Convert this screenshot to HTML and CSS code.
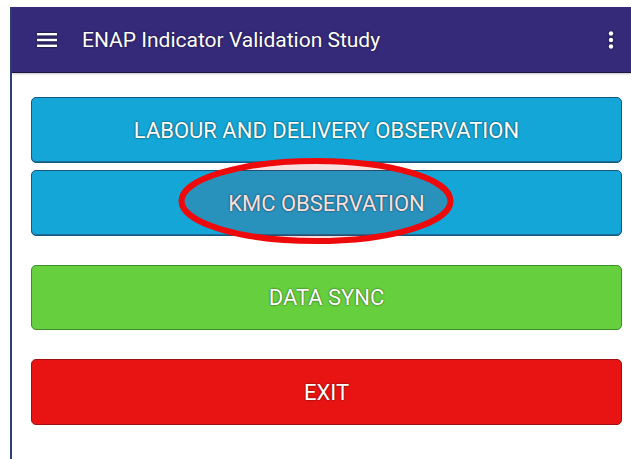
FILE: index.html
```html
<!DOCTYPE html>
<html>
<head>
	<meta charset="utf-8">
	<title>ENAP Indicator Validation Study</title>
	<link rel="stylesheet" href="styles.css">
</head>
<body>
<div class="app">
	<header class="toolbar">
		<span class="menu-icon">
			<svg width="20" height="14" viewBox="0 0 20 14">
				<rect x="0" y="0" width="20" height="2.4" fill="#fff"/>
				<rect x="0" y="5.8" width="20" height="2.4" fill="#fff"/>
				<rect x="0" y="11.6" width="20" height="2.4" fill="#fff"/>
			</svg>
		</span>
		<h1 class="title">ENAP Indicator Validation Study</h1>
		<span class="more-icon">
			<svg width="6" height="18" viewBox="0 0 6 18">
				<circle cx="3" cy="2.5" r="2.2" fill="#fff"/>
				<circle cx="3" cy="9" r="2.2" fill="#fff"/>
				<circle cx="3" cy="15.5" r="2.2" fill="#fff"/>
			</svg>
		</span>
	</header>

	<main class="content">
		<div class="group">
			<button class="btn btn-blue">LABOUR AND DELIVERY OBSERVATION</button>
			<button class="btn btn-blue marked">
				KMC OBSERVATION
				<svg class="circle-mark" width="280" height="90" viewBox="0 0 280 90">
					<ellipse cx="140" cy="45" rx="134.5" ry="40" fill="rgba(190,0,0,0.12)" stroke="#ee0a0a" stroke-width="6"/>
				</svg>
			</button>
		</div>
		<button class="btn btn-green">DATA SYNC</button>
		<button class="btn btn-red">EXIT</button>
	</main>
</div>
</body>
</html>
```

FILE: styles.css
```css
body {
	margin: 0;
	padding: 0;
	background: #fff;
	font-family: Roboto, "Liberation Sans", sans-serif;
}

.app {
	margin: 7px 0 0 10px;
	min-height: 452px;
	border-left: 2px solid #2d4170;
}

.toolbar {
	display: flex;
	align-items: center;
	height: 65px;
	background-color: #35297a;
	color: #fff;
	border-bottom: 1px solid #1c1640;
	box-shadow: 0 1px 2px rgba(0, 0, 0, 0.25);
}

.menu-icon {
	display: flex;
	margin-left: 25px;
	filter: drop-shadow(0 0 1px rgba(0, 0, 0, 0.8));
}

.title {
	margin: 0 0 0 25px;
	font-size: 21px;
	font-weight: 400;
	text-shadow: 0 0 2px rgba(0, 0, 0, 0.7);
	flex: 1;
}

.more-icon {
	display: flex;
	margin-right: 17px;
	filter: drop-shadow(0 0 1px rgba(0, 0, 0, 0.8));
}

.content {
	display: flex;
	flex-direction: column;
	gap: 29px;
	padding: 24px 9px 0 19px;
}

.group {
	display: flex;
	flex-direction: column;
	gap: 7px;
}

.btn {
	display: flex;
	align-items: center;
	justify-content: center;
	height: 66px;
	border-radius: 5px;
	color: #fff;
	font-family: inherit;
	font-size: 22px;
	padding: 0;
	text-shadow: 0 0 2px rgba(0, 0, 0, 0.75);
	cursor: pointer;
}

.btn-blue {
	background-color: #14a6d6;
	border: 1px solid #16577f;
	box-shadow: inset 0 -1px 0 #1c6f9a;
}

.btn-green {
	height: 65px;
	background-color: #66cf3e;
	border: 1px solid #3c8f2a;
}

.btn-red {
	background-color: #e81414;
	border: 1px solid #a01010;
}

.marked {
	position: relative;
}

.circle-mark {
	position: absolute;
	left: 144px;
	top: -15px;
}
```
